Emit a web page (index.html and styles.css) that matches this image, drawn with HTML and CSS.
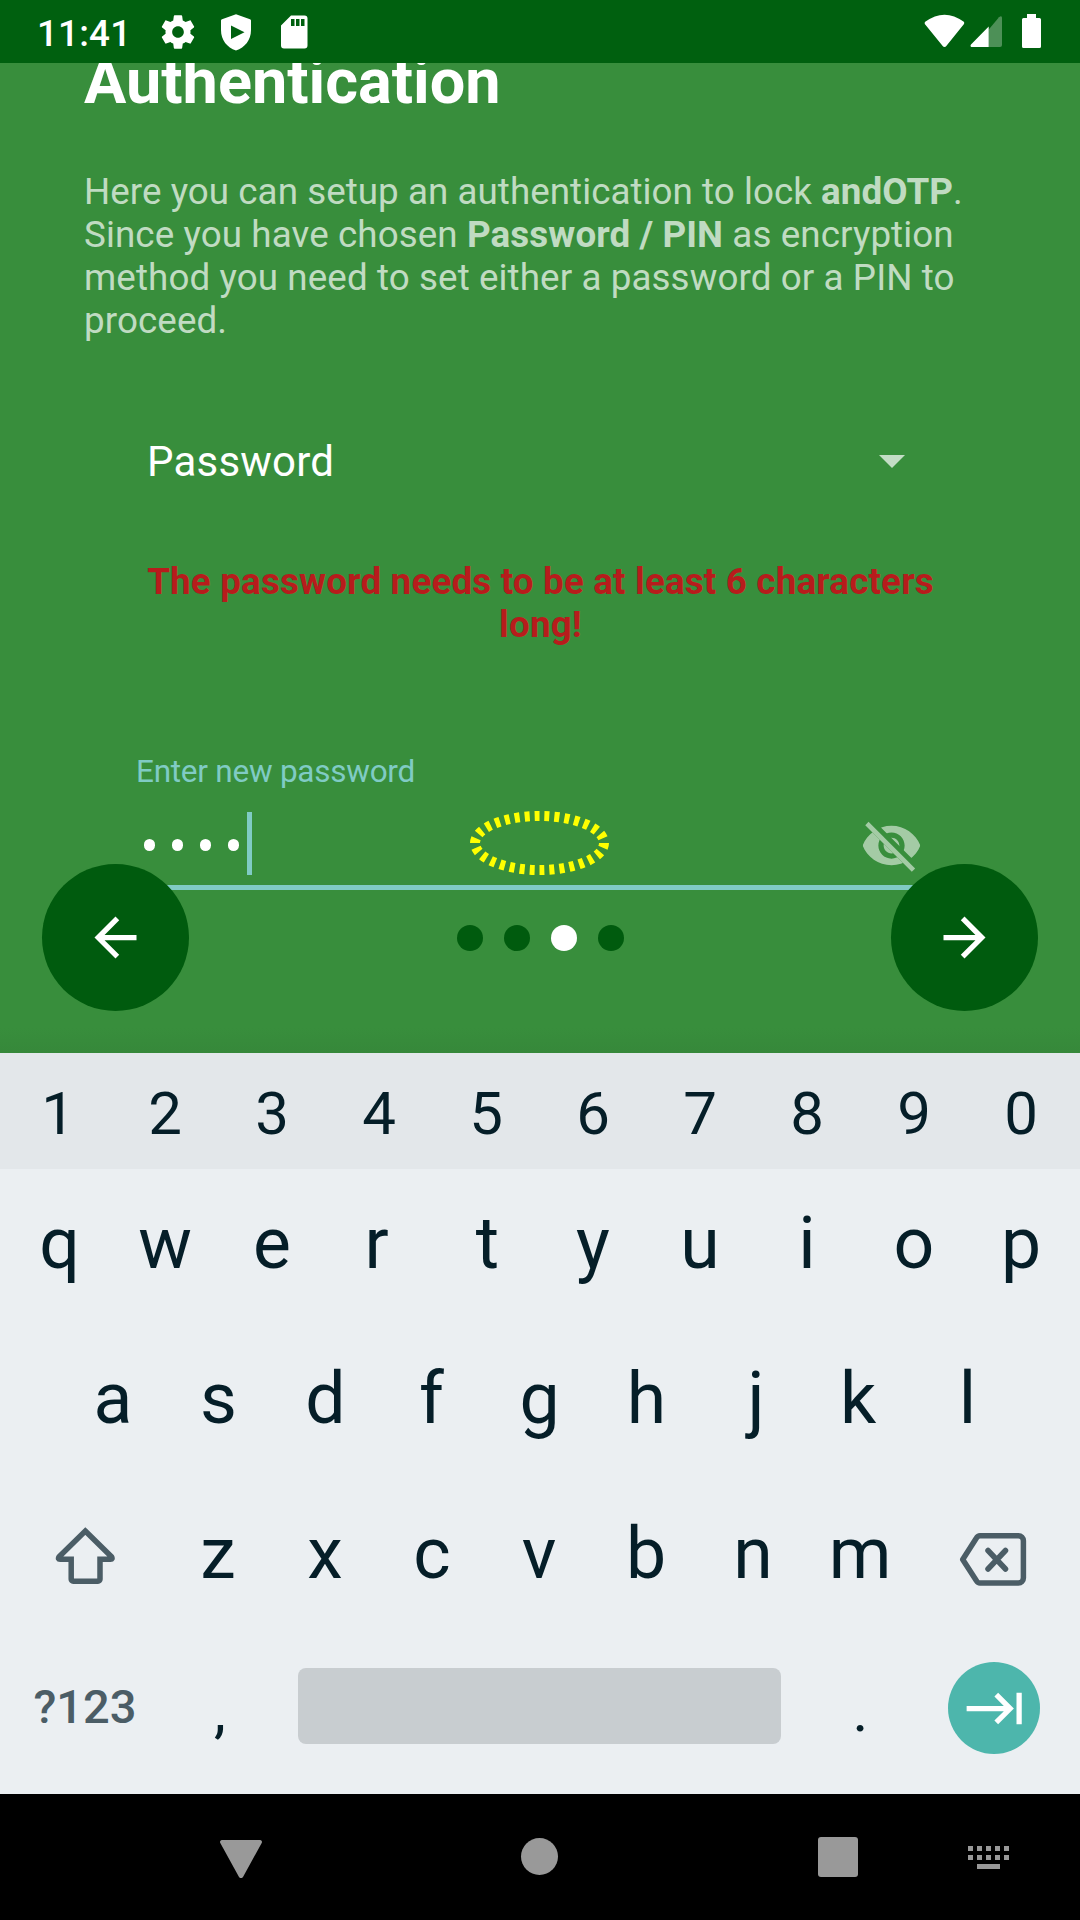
FILE: index.html
```html
<!DOCTYPE html>
<html lang="en">
<head>
<meta charset="utf-8">
<title>andOTP</title>
<link rel="stylesheet" href="styles.css">
</head>
<body>
<div class="screen">
  <header class="status">
    <span class="clock">11:41</span>
    <svg class="st-icon gear" viewBox="0 0 24 24"><path d="M19.43 12.98c.04-.32.07-.64.07-.98s-.03-.66-.07-.98l2.11-1.65c.19-.15.24-.42.12-.64l-2-3.46c-.12-.22-.39-.3-.61-.22l-2.49 1c-.52-.4-1.08-.73-1.69-.98l-.38-2.65C14.46 2.18 14.25 2 14 2h-4c-.25 0-.46.18-.49.42l-.38 2.65c-.61.25-1.17.59-1.69.98l-2.49-1c-.23-.09-.49 0-.61.22l-2 3.46c-.13.22-.07.49.12.64l2.11 1.65c-.04.32-.07.65-.07.98s.03.66.07.98l-2.11 1.65c-.19.15-.24.42-.12.64l2 3.46c.12.22.39.3.61.22l2.49-1c.52.4 1.08.73 1.69.98l.38 2.65c.03.24.24.42.49.42h4c.25 0 .46-.18.49-.42l.38-2.65c.61-.25 1.17-.59 1.69-.98l2.49 1c.23.09.49 0 .61-.22l2-3.46c.12-.22.07-.49-.12-.64l-2.11-1.65zM12 15.5c-1.93 0-3.5-1.57-3.5-3.5s1.57-3.5 3.5-3.5 3.5 1.57 3.5 3.5-1.57 3.5-3.5 3.5z"/></svg>
    <svg class="st-icon" viewBox="0 0 40 40"><path fill-rule="evenodd" d="M20 2.200 34 7.200a1.500 1.500 0 0 1 1 1.400V18c0 10-6 17.500-15 20.500C11 35.500 5 28 5 18V8.600a1.500 1.500 0 0 1 1-1.400ZM15 13.500v13.500l13.500-6.700Z"/></svg>
    <svg class="st-icon" viewBox="0 0 40 40"><path fill-rule="evenodd" d="M17 3.500H30.500a3 3 0 0 1 3 3V33.500a3 3 0 0 1-3 3H10a3 3 0 0 1-3-3V13.500ZM17 7V14h3.500V7ZM22 7V14h3.500V7ZM27 7V14h3.500V7Z"/></svg>
    <svg class="st-right" viewBox="0 0 120 40"><path d="M5.200 9.800Q24.500-4.500 43.800 9.800a2 2 0 0 1 .2 2.200L26.300 34a2.200 2.200 0 0 1-3.600 0L4.800 12a2 2 0 0 1 .4-2.200Z"/><path opacity=".3" d="M68.700 17.400 79 5.200Q82 3 82 6V33a2 2 0 0 1-2 2H68.700Z"/><path d="M51.500 35a1.500 1.500 0 0 1-.5-2.500L68.700 14.500V35Z"/><path d="M107 2h9v4h3.500a1.500 1.500 0 0 1 1.500 1.500V34.500a1.500 1.500 0 0 1-1.500 1.500H103.500a1.500 1.500 0 0 1-1.500-1.500V7.500a1.500 1.500 0 0 1 1.500-1.500H107Z"/></svg>
  </header>

  <main class="slide">
    <h1>Authentication</h1>
    <p class="intro">Here you can setup an authentication to lock <b>andOTP</b>.<br>Since you have chosen <b>Password / PIN</b> as encryption<br>method you need to set either a password or a PIN to<br>proceed.</p>
    <div class="spinner"><span>Password</span><svg class="caret" viewBox="0 0 26 13"><path d="M0 0h26L13 13z"/></svg></div>
    <p class="warning">The password needs to be at least 6 characters<br>long!</p>
    <div class="field">
      <label>Enter new password</label>
      <div class="entry">
        <div class="mask"><i></i><i></i><i></i><i></i><span class="cursor"></span></div>
        <svg class="focus" viewBox="0 0 140 64"><ellipse cx="69.500" cy="32" rx="64.500" ry="27" pathLength="300"/></svg>
        <svg class="eye" viewBox="0 0 24 24">
          <clipPath id="cut"><path d="M2 4.270 19.730 22l2.540-2.540L4.540 1.730V1H23v22H1V4.270Z"/></clipPath>
          <path clip-path="url(#cut)" d="M12 4.500C7 4.500 2.730 7.610 1 12c1.730 4.390 6 7.500 11 7.500s9.270-3.110 11-7.500c-1.730-4.390-6-7.500-11-7.500zM12 17c-2.760 0-5-2.240-5-5s2.240-5 5-5 5 2.240 5 5-2.240 5-5 5zm0-8c-1.660 0-3 1.340-3 3s1.340 3 3 3 3-1.340 3-3-1.340-3-3-3z"/>
          <path class="slash" d="M3.270 4.270 19.740 20.740"/>
        </svg>
      </div>
    </div>
    <nav class="pager">
      <button class="fab"><svg viewBox="0 0 24 24"><path d="M20 11H7.830l5.590-5.590L12 4l-8 8 8 8 1.410-1.410L7.830 13H20v-2z"/></svg></button>
      <div class="dots"><i></i><i></i><i class="on"></i><i></i></div>
      <button class="fab"><svg viewBox="0 0 24 24"><path d="M12 4l-1.410 1.410L16.170 11H4v2h12.170l-5.580 5.590L12 20l8-8z"/></svg></button>
    </nav>
  </main>

  <section class="keyboard">
    <div class="row digits"><span>1</span><span>2</span><span>3</span><span>4</span><span>5</span><span>6</span><span>7</span><span>8</span><span>9</span><span>0</span></div>
    <div class="row"><span class="right-s">q</span><span>w</span><span>e</span><span class="left-l">r</span><span class="right-s">t</span><span>y</span><span>u</span><span>i</span><span>o</span><span>p</span></div>
    <div class="row home"><span class="right-s">a</span><span>s</span><span>d</span><span class="left-s">f</span><span>g</span><span>h</span><span class="right-l">j</span><span class="left-l">k</span><span>l</span></div>
    <div class="row lower">
      <span class="wide"><svg class="shift" viewBox="0 0 60 60"><path d="M30.300 5 56.500 30.700Q58 33.300 55.500 33.300H45V53.200a2 2 0 0 1-2 2H18.200a2 2 0 0 1-2-2V33.300H5.100Q2.500 33.300 4.100 30.700Z"/></svg></span>
      <span>z</span><span>x</span><span>c</span><span>v</span><span>b</span><span>n</span><span>m</span>
      <span class="wide"><svg class="del" viewBox="0 0 68 56"><path d="M21 3.700H59.400a5 5 0 0 1 5 5V46a5 5 0 0 1-5 5H21a4 4 0 0 1-3.400-2L3.700 27.400 17.600 5.700A4 4 0 0 1 21 3.700ZM29 18.500 46.500 37M46.500 18.500 29 37"/></svg></span>
    </div>
    <div class="row bottom">
      <span class="sym">?123</span><span class="punct right-l">,</span><span class="space"></span><span class="punct">.</span>
      <span class="enter"><svg viewBox="0 0 24 24"><path d="M11.590 7.410L15.170 11H1v2h14.170l-3.590 3.590L13 18l6-6-6-6-1.410 1.410zM20 6v12h2V6h-2z"/></svg></span>
    </div>
  </section>

  <footer class="navbar">
    <svg class="back" viewBox="0 0 42 38"><path d="M2 0H40a2 2 0 0 1 1.700 3L23 37a2.300 2.300 0 0 1-4 0L.300 3A2 2 0 0 1 2 0Z"/></svg>
    <i class="home-btn"></i>
    <i class="recent"></i>
    <svg class="ime" viewBox="0 0 41 24"><path d="M0 0h5v5H0zM9 0h5v5H9zM18 0h5v5h-5zM27 0h5v5h-5zM36 0h5v5h-5zM0 9h5v5H0zM9 9h5v5H9zM18 9h5v5h-5zM27 9h5v5h-5zM36 9h5v5h-5zM9 18h23v5H9z"/></svg>
  </footer>
</div>
</body>
</html>
```
FILE: styles.css
```css
* { box-sizing: border-box; }
body { margin: 0; font-family: Roboto, "Liberation Sans", sans-serif; }
svg { display: block; fill: #fff; flex: none; }
h1, p { margin: 0; }

.screen { width: 1080px; height: 1920px; display: flex; flex-direction: column; overflow: hidden; }

.status { height: 63px; flex: none; background: #00600f; color: #fff; display: flex; align-items: center; padding: 0 40px 0 37px; }
.clock { font-size: 36.75px; font-weight: 500; line-height: 43px; padding-top: 3px; width: 121px; letter-spacing: .2px; }
.st-icon { width: 40px; height: 40px; margin-right: 18px; }
.st-right { width: 120px; height: 40px; margin: 1px 0 0 auto; overflow: visible; }

.slide { height: 990px; flex: none; padding: 0 84px; background: linear-gradient(#388e3c 965px, #36883a 990px); color: #fff; display: flex; flex-direction: column; overflow: hidden; }
h1 { font-size: 63px; line-height: 74px; font-weight: 700; margin-top: -18px; }
.intro { font-size: 36.75px; line-height: 43px; margin-top: 51px; color: rgba(255, 255, 255, .7); white-space: nowrap; letter-spacing: .1px; }
.intro::first-line { letter-spacing: .05px; }
.spinner { display: flex; justify-content: space-between; align-items: center; font-size: 42px; line-height: 49px; letter-spacing: .2px; margin-top: 95px; padding: 0 91px 0 63px; }
.caret { width: 26px; height: 13px; margin-bottom: 1px; fill: rgba(255, 255, 255, .7); }
.warning { margin-top: 74px; font-size: 36.75px; line-height: 43px; font-weight: 700; letter-spacing: .18px; text-align: center; padding-left: 1px; color: #b71c1c; white-space: nowrap; }
.field { margin: 107px 52px 0; border-bottom: 5px solid #80cbc4; }
.field label { display: block; font-size: 31.5px; line-height: 37px; letter-spacing: -.25px; color: #80cbc4; }
.entry { height: 95px; display: flex; padding: 22px 21px 0 8px; }
.mask { width: 116px; height: 63px; display: flex; align-items: center; gap: 17px; }
.mask i { width: 11px; height: 12px; border-radius: 6px; background: #fff; margin-top: 3px; flex: none; }
.cursor { width: 5px; height: 63px; background: #80cbc4; margin-left: -9px; flex: none; }
.focus { width: 140px; height: 64px; margin: -1px 0 0 210px; }
.focus ellipse { fill: none; stroke: #ff0; stroke-width: 10; stroke-dasharray: 5 5; }
.eye { width: 63px; height: 63px; margin: 2px 0 0 auto; opacity: .54; }
.eye .slash { fill: none; stroke: #fff; stroke-width: 1.8; stroke-linecap: square; }
.pager { display: flex; align-items: center; justify-content: space-between; margin: -26px -42px 0; position: relative; }
.fab { width: 147px; height: 147px; border: 0; border-radius: 50%; background: #005b0e; display: grid; place-items: center; padding: 0; }
.fab svg { width: 63px; height: 63px; }
.dots { display: flex; gap: 21px; }
.dots i { width: 26px; height: 26px; border-radius: 50%; background: #005b0e; }
.dots .on { background: #fff; }

.keyboard { height: 741px; flex: none; background: #ebeff2; color: #051e28; }
.row { height: 154.5px; padding: 0 5.5px 0 4.5px; display: flex; font-size: 71.5px; line-height: 84px; }
.row span { width: 107px; flex: none; text-align: center; }
.keyboard .digits { height: 116px; background: #e3e7ea; font-size: 60px; line-height: 70px; padding-top: 25.5px; }
.row:not(.digits) { padding-top: 33px; }
.keyboard .home { padding-left: 58px; }
.keyboard .lower { padding-top: 34px; }
.right-s { padding-left: 3px; }
.right-l { padding-left: 5px; }
.left-s { padding-right: 2px; }
.left-l { padding-right: 5px; }
.row .wide { width: 160px; }
.row .wide svg { fill: none; stroke: #4b5d66; stroke-width: 5.5; stroke-linecap: round; }
.shift { width: 60px; height: 60px; margin: 14px 0 0 50px; }
.del { width: 68px; height: 56px; margin: 20px 0 0 45px; stroke-linejoin: round; }
.keyboard .bottom { padding: 29.5px 0 0 4px; align-items: flex-start; }
.row .sym { width: 161px; font-size: 47px; font-weight: 500; line-height: 56px; color: #4b5d66; margin: 17px -1px 0 0; padding-left: 1px; }
.row .punct { font-size: 60px; line-height: 70px; margin-top: 13.5px; }
.row .space { width: 483px; height: 76px; margin: 6px 26px 0 27px; border-radius: 8px; background: #c8cdd0; }
.row .enter { width: 92px; height: 92px; margin-left: 34px; border-radius: 50%; background: #4db6ac; display: grid; place-items: center; }
.enter svg { width: 63px; height: 63px; margin-left: 3px; }

.navbar { height: 126px; flex: none; background: #000; display: flex; align-items: center; padding-left: 220px; }
.navbar svg { fill: #999; }
.navbar i { background: #999; }
.back { width: 42px; height: 38px; margin-top: 4px; }
.home-btn { width: 37px; height: 37px; border-radius: 50%; margin: 0 0 1px 259px; }
.recent { width: 40px; height: 40px; border-radius: 3px; margin-left: 260px; }
.ime { width: 41px; height: 24px; margin: 1px 0 0 110px; }
```
